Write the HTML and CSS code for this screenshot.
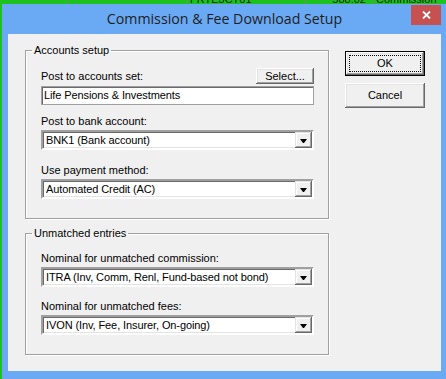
FILE: index.html
```html
<!DOCTYPE html>
<html lang="en">
<head>
    <meta charset="UTF-8">
    <title>Commission &amp; Fee Download Setup</title>
    <link rel="stylesheet" href="styles.css">
</head>
<body>
    <div class="backdrop">
        <div class="cell cell-a"></div>
        <div class="cell cell-b"></div>
        <div class="cell cell-c">FRTE3CT01</div>
        <div class="cell cell-d">588.02</div>
        <div class="cell cell-e">Commission</div>
    </div>

    <div class="window">
        <div class="titlebar">
            <span></span>
            <span class="title">Commission &amp; Fee Download Setup</span>
            <span class="close">
                <svg width="9" height="8" viewBox="0 0 9 8"><path d="M1 0.5 L8 7.5 M8 0.5 L1 7.5" stroke="#fff" stroke-width="1.8" fill="none"/></svg>
            </span>
        </div>

        <div class="client">
            <div class="groups">
                <fieldset class="group group-accounts">
                    <legend>Accounts setup</legend>
                    <div class="field-head">
                        <label>Post to accounts set:</label>
                        <button class="btn btn-small">Select...</button>
                    </div>
                    <div class="edit">Life Pensions &amp; Investments</div>

                    <div class="field field-bank">
                        <label>Post to bank account:</label>
                        <div class="combo"><span class="combo-text">BNK1 (Bank account)</span><span class="drop"><span class="arrow"></span></span></div>
                    </div>

                    <div class="field field-method">
                        <label>Use payment method:</label>
                        <div class="combo"><span class="combo-text">Automated Credit (AC)</span><span class="drop"><span class="arrow"></span></span></div>
                    </div>
                </fieldset>

                <fieldset class="group group-unmatched">
                    <legend>Unmatched entries</legend>
                    <div class="field">
                        <label>Nominal for unmatched commission:</label>
                        <div class="combo"><span class="combo-text">ITRA (Inv, Comm, Renl, Fund-based not bond)</span><span class="drop"><span class="arrow"></span></span></div>
                    </div>

                    <div class="field field-fees">
                        <label>Nominal for unmatched fees:</label>
                        <div class="combo"><span class="combo-text">IVON (Inv, Fee, Insurer, On-going)</span><span class="drop"><span class="arrow"></span></span></div>
                    </div>
                </fieldset>
            </div>

            <div class="actions">
                <button class="btn btn-default"><span class="focus">OK</span></button>
                <button class="btn btn-dialog">Cancel</button>
            </div>
        </div>
    </div>
</body>
</html>
```

FILE: styles.css
```css
body {
    margin: 0;
    width: 446px;
    height: 379px;
    overflow: hidden;
    background-color: #1ec21e;
    font-family: 'Liberation Sans', Arial, sans-serif;
    font-size: 11px;
    color: #000;
}

/* the spreadsheet peeking out behind the dialog */
.backdrop {
    display: flex;
    height: 4px;
    overflow: hidden;
    color: #1a1a1a;
}

.cell {
    border-right: 1px solid #6f8f6f;
    line-height: 13px;
    margin-top: -7px;
    height: 11px;
    box-sizing: border-box;
    white-space: nowrap;
}

.cell-a { width: 67px; }
.cell-b { width: 120px; }
.cell-c { width: 119px; padding-left: 3px; }
.cell-d { width: 67px; text-align: right; padding-right: 6px; }
.cell-e { flex: 1; padding-left: 3px; border-right: none; }

.window {
    margin-left: 2px;
    width: 444px;
    height: 375px;
    box-sizing: border-box;
    padding: 0 5px 8px 6px;
    background-color: #6aa9f3;
}

.titlebar {
    display: grid;
    grid-template-columns: 1fr auto 1fr;
    align-items: start;
    height: 30px;
}

.title {
    font-family: 'Open Sans', 'Noto Sans', sans-serif;
    font-size: 14.2px;
    line-height: 30px;
    color: #1e1e1e;
    white-space: nowrap;
}

.close {
    justify-self: end;
    display: flex;
    align-items: center;
    justify-content: center;
    width: 30px;
    height: 20px;
    margin-top: 1px;
    background-color: #c75050;
}

.close svg {
    display: block;
}

.client {
    display: flex;
    height: 337px;
    box-sizing: border-box;
    padding: 10px 0 0 17px;
    background-color: #f0f0f0;
}

.group {
    width: 304px;
    box-sizing: border-box;
    margin: 0;
    padding: 11px 14px 19px 15px;
    border: 1px solid #a0a0a0;
    box-shadow: 1px 1px 0 #fff, inset 1px 1px 0 #fff;
    min-width: 0;
}

.group legend {
    padding: 0 2px;
    margin-left: -9px;
    line-height: 13px;
}

.group-unmatched {
    margin-top: 8px;
    padding-top: 12px;
}

label {
    display: block;
    line-height: 13px;
    white-space: nowrap;
}

.field {
    margin-top: 13px;
}

.field label {
    margin-bottom: 2px;
}

.field-bank {
    margin-top: 10px;
}

.field-method {
    margin-top: 14px;
}

.group-unmatched .field:first-of-type {
    margin-top: 0;
}

.field-head {
    display: flex;
    align-items: center;
    justify-content: space-between;
    height: 16px;
}

.edit,
.combo {
    display: flex;
    box-sizing: border-box;
    background-color: #fff;
    white-space: nowrap;
    letter-spacing: -0.1px;
}

.edit {
    height: 19px;
    margin-top: 2px;
    padding-left: 2px;
    line-height: 16px;
    border: 1px solid #a0a0a0;
    box-shadow: inset 1px 1px 0 #696969;
}

.combo {
    height: 20px;
    padding: 0 0 0 2px;
    border: 2px solid;
    border-color: #a0a0a0 #fff #fff #a0a0a0;
    box-shadow: inset 1px 1px 0 #696969, inset -1px -1px 0 #e3e3e3;
}

.combo-text {
    flex: 1;
    overflow: hidden;
    line-height: 16px;
    padding-left: 1px;
}

.drop {
    display: flex;
    align-items: center;
    justify-content: center;
    width: 17px;
    height: 16px;
    box-sizing: border-box;
    background-color: #f0f0f0;
    box-shadow: inset -1px -1px 0 #696969, inset 1px 1px 0 #e3e3e3, inset -2px -2px 0 #a0a0a0, inset 2px 2px 0 #fff;
}

.arrow {
    width: 1px;
    height: 0;
    border-left: 3px solid transparent;
    border-right: 3px solid transparent;
    border-top: 4px solid #000;
    margin-top: 1px;
}

.btn {
    display: block;
    padding: 0;
    border: none;
    background-color: #f0f0f0;
    font-family: 'Liberation Sans', Arial, sans-serif;
    font-size: 11px;
    color: #000;
    box-shadow: inset -1px -1px 0 #696969, inset 1px 1px 0 #fff, inset -2px -2px 0 #a0a0a0, inset 2px 2px 0 #e3e3e3;
}

.btn-small {
    width: 58px;
    height: 16px;
    line-height: 16px;
}

.actions {
    display: flex;
    flex-direction: column;
    gap: 7px;
    margin: 7px 0 0 16px;
}

.btn-dialog,
.btn-default {
    width: 80px;
    height: 25px;
    line-height: 25px;
}

.btn-default {
    border: 1px solid #000;
    padding: 3px;
}

.focus {
    display: block;
    height: 100%;
    box-sizing: border-box;
    border: 1px dotted #000;
    line-height: 15px;
}
```
